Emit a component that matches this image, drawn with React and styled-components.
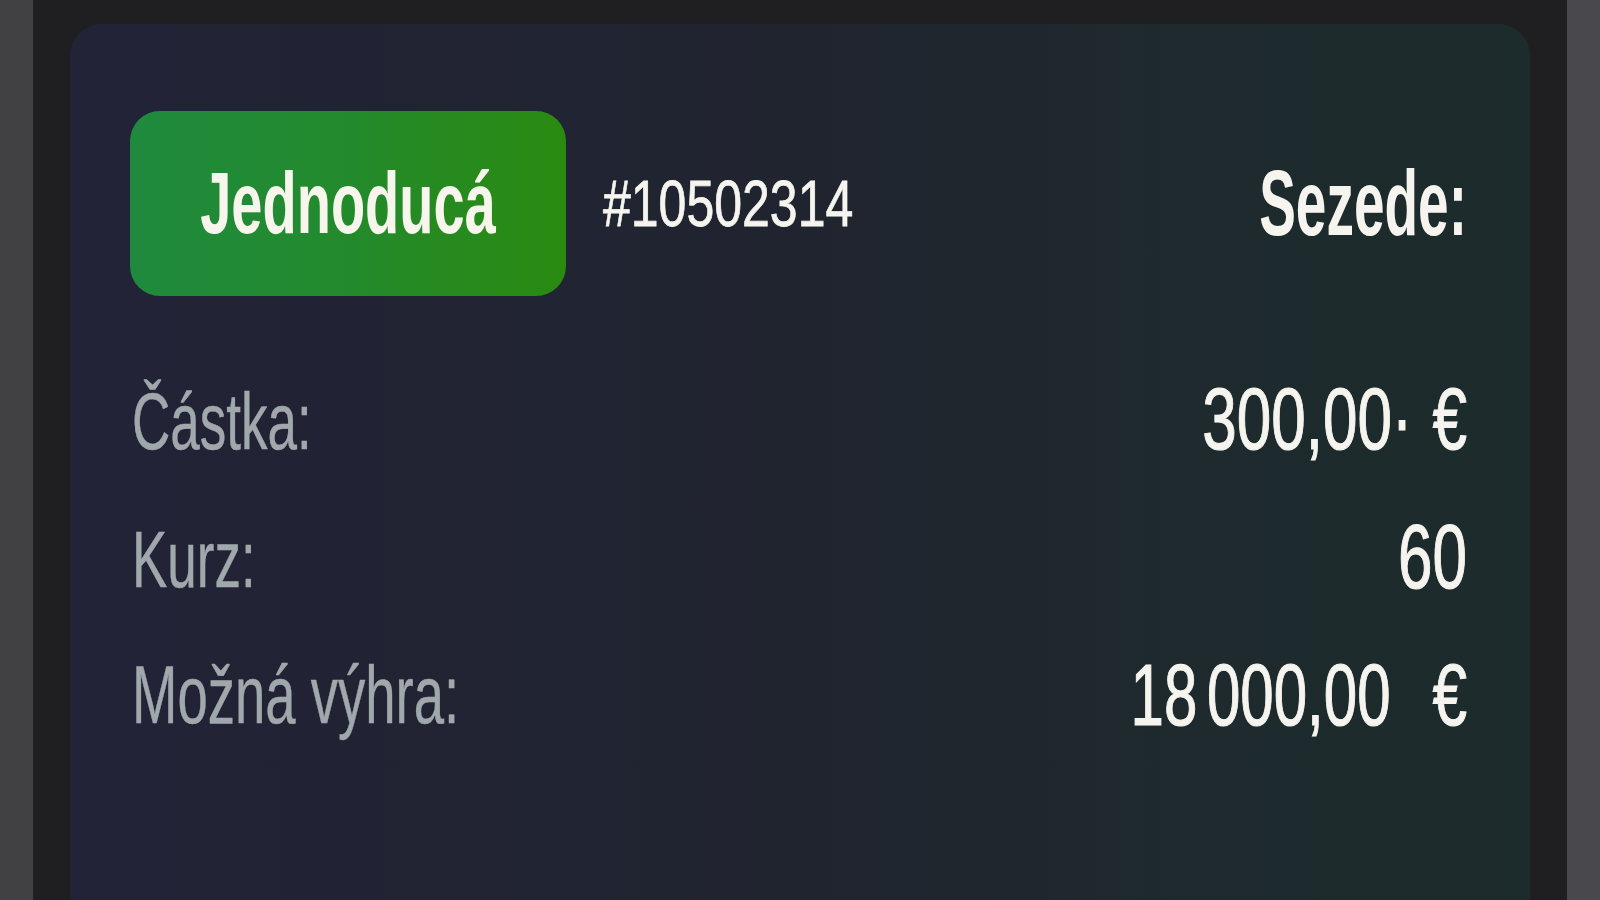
import React from "react";
import styled, { createGlobalStyle } from "styled-components";

const Global = createGlobalStyle`
  html, body { margin: 0; padding: 0; background: #1f1f21; }
  body { font-family: "Liberation Sans", Arial, sans-serif; overflow: hidden; }
`;

const Page = styled.div`
  display: grid;
  grid-template-columns: 33px 1fr 33px;
  height: 900px;
  width: 1600px;
  overflow: hidden;
`;

const SideStrip = styled.div`
  background: ${(p) => (p.$right ? "#49484d" : "#414144")};
`;

const Frame = styled.div`
  background: #1f1f21;
  padding: 24px 37px 0 37px;
  overflow: hidden;
  display: flex;
  flex-direction: column;
`;

const Card = styled.section`
  flex: 1;
  margin-bottom: -40px;
  border-radius: 32px 32px 0 0;
  background: linear-gradient(90deg, #222337 0%, #20242f 50%, #1e2a2d 78%, #1c2b2c 100%);
  padding: 87px 63px 0 60px;
  display: flex;
  flex-direction: column;
`;

const Header = styled.header`
  display: flex;
  align-items: center;
`;

const TypeBadge = styled.div`
  width: 436px;
  height: 185px;
  border-radius: 30px;
  background: linear-gradient(90deg, #1f8a3e 0%, #238a2c 50%, #2a8a10 100%);
  display: flex;
  align-items: center;
  justify-content: center;
  flex-shrink: 0;
`;

const Tall = styled.span`
  display: inline-block;
  line-height: 1;
  white-space: pre;
  font-size: ${(p) => p.$size}px;
  font-weight: ${(p) => (p.$bold ? 700 : 400)};
  color: ${(p) => p.$color || "#f5f4ee"};
  -webkit-text-stroke: ${(p) => p.$stroke || 0}px ${(p) => p.$color || "#f5f4ee"};
  transform: scaleY(${(p) => p.$sy});
  transform-origin: center;
`;

const TicketId = styled.div`
  margin-left: 37px;
  flex: 1;
`;

const Rows = styled.div`
  margin-top: 55px;
  display: flex;
  flex-direction: column;
`;

const Row = styled.div`
  height: 138px;
  display: flex;
  align-items: center;
  justify-content: space-between;
  padding-left: 2px;
`;

const Value = styled.div`
  display: flex;
  align-items: center;
`;

const Amount = styled(Tall)`
  word-spacing: -7px;
`;

const Currency = styled(Tall)`
  margin-left: ${(p) => p.$gap}px;
`;

const LABEL = "#a1a8ac";

export default function App() {
  return (
    <>
      <Global />
      <Page>
        <SideStrip />
        <Frame>
          <Card>
            <Header>
              <TypeBadge>
                <Tall $size={56} $bold $sy={1.55} $color="#f7f6ec">Jednoducá</Tall>
              </TypeBadge>
              <TicketId>
                <Tall $size={50} $sy={1.28} $stroke={0.6}>#10502314</Tall>
              </TicketId>
              <Tall $size={55} $bold $sy={1.68}>Sezede:</Tall>
            </Header>
            <Rows>
              <Row>
                <Tall $size={53} $sy={1.52} $color={LABEL} $stroke={0.3}>Částka:</Tall>
                <Value>
                  <Amount $size={62} $sy={1.4} $stroke={0.8}>300,00·</Amount>
                  <Currency $size={62} $sy={1.4} $gap={20} $stroke={0.8}>€</Currency>
                </Value>
              </Row>
              <Row>
                <Tall $size={53} $sy={1.52} $color={LABEL} $stroke={0.3}>Kurz:</Tall>
                <Value>
                  <Amount $size={62} $sy={1.45} $stroke={0.8}>60</Amount>
                </Value>
              </Row>
              <Row>
                <Tall $size={54.5} $sy={1.5} $color={LABEL} $stroke={0.3}>Možná výhra:</Tall>
                <Value>
                  <Amount $size={60} $sy={1.45} $stroke={0.8}>18 000,00</Amount>
                  <Currency $size={62} $sy={1.4} $gap={42} $stroke={0.8}>€</Currency>
                </Value>
              </Row>
            </Rows>
          </Card>
        </Frame>
        <SideStrip $right />
      </Page>
    </>
  );
}
